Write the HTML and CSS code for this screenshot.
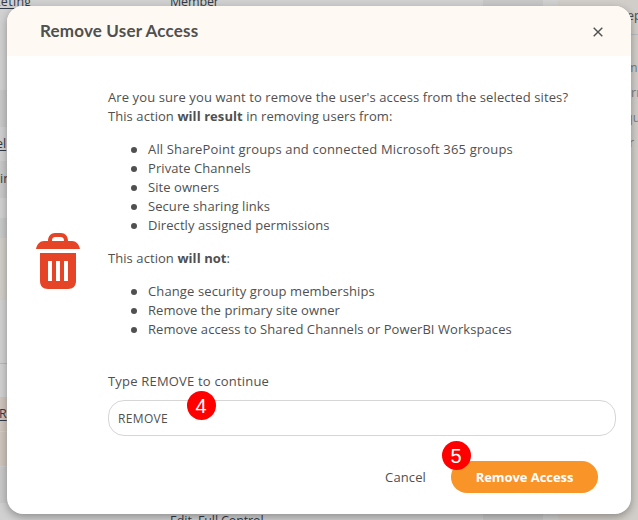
FILE: index.html
```html
<!DOCTYPE html>
<html lang="en">
<head>
<meta charset="utf-8">
<title>Remove User Access</title>
<link rel="stylesheet" href="styles.css">
</head>
<body>
<div class="page">
  <main class="table">
    <div class="row row-head"><a class="cut-left">keting</a><span class="member">Member</span></div>
    <div class="row row-a"></div>
    <div class="row row-b"><a class="site">el</a></div>
    <div class="row row-c"><span>in</span></div>
    <div class="row row-d"></div>
    <div class="row row-gap"></div>
    <div class="row row-warm"></div>
    <div class="row row-e"></div>
    <div class="row row-f"></div>
    <div class="row row-peach"><a>R</a></div>
    <div class="row row-peach"></div>
    <div class="row row-g"></div>
    <div class="row row-last"><span class="perm">Edit, Full Control</span></div>
  </main>
  <div class="scroll"></div>
  <div class="gutter"></div>
  <aside class="side">
    <div class="side-title">ep</div>
    <div class="side-text"><div class="t1">m</div><div class="t2">ern</div><div class="t3">qu</div><div class="t4">r .</div></div>
  </aside>
</div>
<section class="dialog">
  <header class="dialog-head">
    <h1>Remove User Access</h1>
    <svg class="close" viewBox="0 0 12 12"><path d="M1.7 1.7l8.6 8.6M10.3 1.7l-8.6 8.6"/></svg>
  </header>
  <div class="dialog-body">
    <svg class="trash" viewBox="0 0 44 56">
      <path d="M0 16C1 11 4 8 8 8h4C12 3 15 0 19 0h6c4 0 7 3 7 8h4c4 0 7 3 8 8zM16 8h12c0-3-1-4-4-4h-4c-3 0-4 1-4 4z"/>
      <path fill-rule="evenodd" d="M4 20h36v28c0 5-3 8-8 8H12c-5 0-8-3-8-8zM12 28v20h4V28zM20 28v20h4V28zM28 28v20h4V28z"/>
    </svg>
    <div class="copy">
      <p><span class="question">Are you sure you want to remove the user's access from the selected sites?</span><br>This action <b>will result</b> in removing users from:</p>
      <ul>
        <li><span class="groups">All SharePoint groups and connected Microsoft 365 groups</span></li>
        <li><span>Private Channels</span></li>
        <li><span>Site owners</span></li>
        <li><span>Secure sharing links</span></li>
        <li><span>Directly assigned permissions</span></li>
      </ul>
      <p>This action <b>will not</b>:</p>
      <ul>
        <li><span class="memberships">Change security group memberships</span></li>
        <li><span>Remove the primary site owner</span></li>
        <li><span>Remove access to Shared Channels or PowerBI Workspaces</span></li>
      </ul>
      <div class="label">Type REMOVE to continue</div>
      <div class="field"><span class="value">REMOVE</span><i class="badge badge-4">4</i></div>
    </div>
  </div>
  <footer class="actions">
    <span class="cancel">Cancel</span>
    <div class="confirm"><span>Remove Access</span><i class="badge badge-5">5</i></div>
  </footer>
</section>
</body>
</html>
```
FILE: styles.css
```css
* { box-sizing: border-box; }
body {
  margin: 0;
  width: 638px;
  height: 520px;
  overflow: hidden;
  position: relative;
  font: 13px/19px "Open Sans", "Noto Sans", sans-serif;
  color: #505050;
}
.page { display: grid; grid-template-columns: 483px 60px 15px 80px; height: 520px; background: #d1d1d1; font-size: 12.5px; }
.table { overflow: hidden; }
.row { overflow: hidden; white-space: nowrap; color: #333a48; }
.row a { text-decoration: underline; text-underline-offset: 2px; }
.row-head { display: flex; line-height: 18px; margin-top: -7px; height: 27px; }
.cut-left { margin-left: -6px; width: 176px; letter-spacing: .3px; }
.member { letter-spacing: -.15px; }
.row-a { height: 70px; }
.row-b { height: 71px; background: linear-gradient(#c9c9c9 37px, #d0d0d0 37px); padding-top: 44px; }
.row-c { height: 37px; background: #c9c9c9; padding-top: 8px; }
.site { margin-left: -4px; }
.row-d { height: 20px; }
.row-gap { height: 20px; background: #c8c9c9; }
.row-warm { height: 62px; background: #d1cdc8; }
.row-e { height: 64px; border-bottom: 1px solid #b8b8b8; }
.row-f { height: 33px; }
.row-peach { height: 35px; background: #cfc5be; border-bottom: 1px solid #cfcfcf; padding-top: 7px; }
.row-peach a { margin-left: -1px; }
.row-g { height: 36px; background: #c9c9c9; }
.row-last { height: 17px; padding: 8px 0 0 170px; }
.perm { letter-spacing: -.12px; }
.scroll { background: #c8c8c8; }
.gutter { background: #d1d1d1; }
.side { background: #d1cdc8; overflow: hidden; padding-left: 70px; }
.side-title { height: 35px; padding-top: 6px; border-bottom: 1px solid #b9bcbf; color: #4a4a4a; margin-left: -1px; }
.side-text { padding-top: 20px; line-height: 25px; color: #75808a; white-space: nowrap; }
.t1 { margin-left: -2px; }
.t2 { margin-left: -4px; }
.t3 { margin-left: -3px; }
.t4 { margin-left: 1px; }

.dialog {
  position: absolute;
  left: 7px;
  top: 6px;
  width: 624px;
  height: 508px;
  border-radius: 16px;
  background: #fff;
  box-shadow: 0 3px 9px rgba(0, 0, 0, .32);
}
.dialog-head {
  height: 50px;
  display: flex;
  align-items: center;
  justify-content: space-between;
  padding: 0 27px 0 33px;
  border-radius: 16px 16px 0 0;
  background: #fef9f3;
}
h1 { margin: 0; font: bold 17px/24px Lato, sans-serif; color: #505050; letter-spacing: .18px; }
.close { width: 12px; height: 12px; margin-top: 1px; fill: none; stroke: #505050; stroke-width: 1.4; }
.dialog-body { display: flex; padding: 32px 15px 0 29px; }
.trash { width: 44px; height: 56px; margin-top: 145px; flex: none; fill: #e54427; fill-rule: evenodd; }
.copy { margin-left: 28px; width: 508px; white-space: nowrap; letter-spacing: .07px; }
.question { letter-spacing: .1px; }
.groups { letter-spacing: .165px; }
.memberships { letter-spacing: .12px; }
.copy p { margin: 0; }
.copy ul { margin: 14px 0; padding-left: 40px; }
.copy ul:last-of-type { margin-bottom: 33px; }
.copy li { list-style: none; display: flex; align-items: center; }
.copy li::before { content: ""; width: 6px; height: 6px; border-radius: 50%; background: #505050; margin: 0 11px 0 -17px; flex: none; }
.label { letter-spacing: .19px; }
.field {
  position: relative;
  height: 36px;
  margin-top: 9px;
  padding: 9px 9px;
  line-height: 18px;
  border: 1px solid #d6d6d6;
  border-radius: 16px;
  font-size: 12px;
}
.value { letter-spacing: .35px; }
.badge {
  position: absolute;
  width: 29px;
  height: 29px;
  border-radius: 50%;
  background: #f00;
  color: #fff;
  font: 20px/30px "Liberation Sans", sans-serif;
  text-align: center;
  letter-spacing: 0;
}
.badge-4 { left: 77.5px; top: -10px; }
.badge-5 { left: -9.5px; top: -20px; }
.actions { display: flex; align-items: center; justify-content: flex-end; gap: 25px; padding: 25px 33px 0 0; }
.cancel { letter-spacing: .12px; }
.confirm { position: relative; width: 147px; height: 32px; border-radius: 16px; background: #f89428; color: #fff; font-weight: bold; line-height: 32px; text-align: center; letter-spacing: -.06px; }
```
